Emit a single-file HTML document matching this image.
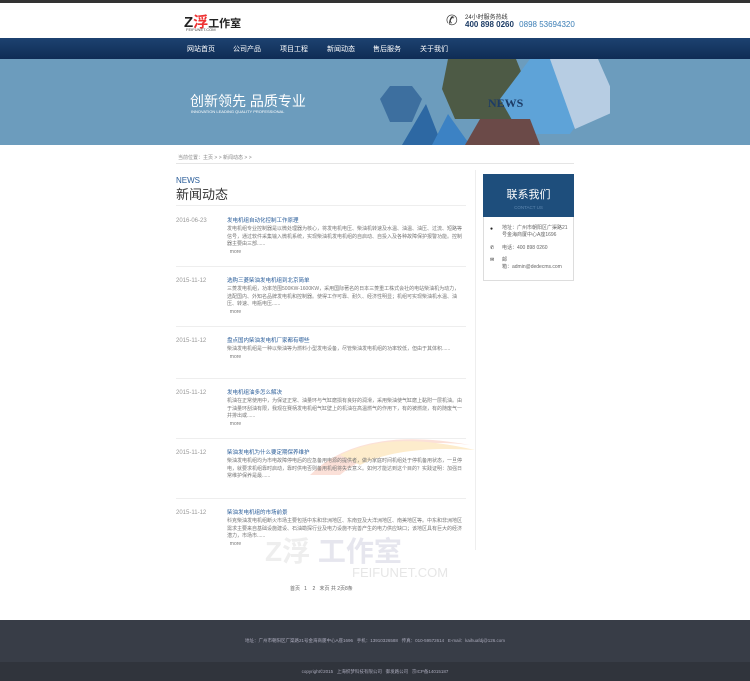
<!DOCTYPE html>
<html><head><meta charset="utf-8"><style>
*{margin:0;padding:0;box-sizing:border-box}
body{width:750px;height:681px;overflow:hidden;background:#fff;font-family:"Liberation Sans","Noto Sans CJK SC",sans-serif;position:relative;color:#666}
.abs{position:absolute}
.top{top:0;left:0;width:750px;height:3px;background:#333}
.nav{top:38px;left:0;width:750px;height:21px;background:linear-gradient(#1d4270,#0f2c55)}
.nav span{position:absolute;top:6px;font-size:7px;color:#fff}
.banner{top:59px;left:0;width:750px;height:86px;background:#6c9cbd}
.art{position:absolute;left:176px;width:290px;font-size:5px;line-height:7.5px}
.art .d{position:absolute;left:0;top:0;color:#999;font-size:6px}
.art .t{position:absolute;left:51px;top:0;color:#2a5d99;font-size:5.5px}
.art .b{position:absolute;left:51px;top:8px;width:237px;color:#777}
.art hr{position:absolute;left:0;top:-12px;width:290px;border:0;border-top:1px solid #eee}
</style></head><body>
<div class="abs top"></div>
<div class="abs" style="left:184px;top:11px;font-size:15px;font-weight:bold;color:#222">Z<span style="color:#e33">浮</span><span style="font-size:11px">工作室</span></div>
<div class="abs" style="left:186px;top:27px;font-size:4px;color:#444">FEIFUNET.COM</div>
<div class="abs" style="left:446px;top:12px;font-size:14px;color:#333">✆</div>
<div class="abs" style="left:465px;top:12px;font-size:6px;color:#333">24小时服务热线</div>
<div class="abs" style="left:465px;top:20px;font-size:8px;font-weight:bold;color:#1d3c66">400 898 0260 <span style="font-weight:normal;color:#3a7db5;margin-left:3px">0898 53694320</span></div>
<div class="abs nav"><span style="left:187px">网站首页</span><span style="left:233px">公司产品</span><span style="left:280px">项目工程</span><span style="left:327px">新闻动态</span><span style="left:373px">售后服务</span><span style="left:420px">关于我们</span></div>
<div class="abs banner">
<div class="abs" style="left:190px;top:32px;font-size:14px;color:#fff">创新领先 品质专业</div>
<div class="abs" style="left:191px;top:50px;font-size:4px;color:#fff">INNOVATION LEADING QUALITY PROFESSIONAL</div>
<svg class="abs" style="left:370px;top:0" width="240" height="86"><polygon points="40,83 48,55 55,83" fill="none"/><polygon points="10,40 20,27 42,27 52,40 42,63 20,63" fill="#3d6f9f"/><polygon points="78,0 146,0 158,30 146,60 85,60 72,30" fill="#4d5a45"/><polygon points="130,40 160,0 215,0 225,40 200,75 150,75" fill="#5ea3d8"/><text x="118" y="48" font-size="12" font-family="Liberation Serif" font-weight="bold" fill="#1d3c66">NEWS</text><polygon points="32,86 56,45 72,86" fill="#2d68a3"/><polygon points="62,86 78,55 100,86" fill="#3c82c4"/><polygon points="180,0 228,0 250,50 205,70" fill="#b7cde3"/><polygon points="110,60 160,60 170,86 95,86" fill="#6b4a48"/></svg>
</div>
<div class="abs" style="left:178px;top:154px;font-size:5px;color:#888">当前位置：主页 &gt; &gt; 新闻动态 &gt; &gt;</div>
<div class="abs" style="left:176px;top:163px;width:398px;border-top:1px solid #e5e5e5"></div>
<div class="abs" style="left:176px;top:176px;font-size:8px;color:#2a5d99">NEWS</div>
<div class="abs" style="left:176px;top:184px;font-size:13px;color:#333">新闻动态</div>
<div class="abs" style="left:176px;top:205px;width:290px;border-top:1px solid #eee"></div>
<svg class="abs" style="left:300px;top:425px" width="180" height="60"><path d="M10,50 Q60,0 170,20 Q90,10 40,50Z" fill="#fbe0d8"/><path d="M40,30 Q90,5 175,25 Q100,20 60,40Z" fill="#fdeccc"/></svg>
<div class="abs" style="left:265px;top:530px;font-size:28px;font-weight:bold;color:#eee">Z浮 <span style="color:#e6e6ee">工作室</span></div>
<div class="abs" style="left:352px;top:565px;font-size:13px;color:#e6e6e6">FEIFUNET.COM</div>
<div class="art" style="top:218px"><div class="d">2016-06-23</div><div class="t">发电机组自动化控制工作原理</div><div class="b">发电机组专业控制器是以微处理器为核心，将发电机电压、柴油机转速及水温、油温、油压、过流、短路等信号，通过软件采集输入微机系统，实现柴油机发电机组的自启动、自投入及各种故障保护报警功能。控制器主要由三部......<br>&nbsp;&nbsp;more</div></div>
<div class="art" style="top:278px"><hr><div class="d">2015-11-12</div><div class="t">选购三菱柴油发电机组到北京简单</div><div class="b">三菱发电机组，功率范围500KW-1600KW，采用国际著名的日本三菱重工株式会社的电站柴油机为动力，选配国内、外知名品牌发电机和控制器。使得工作可靠、耐久、经济性明显；机组可实现柴油机水温、油压、转速、电瓶电压......<br>&nbsp;&nbsp;more</div></div>
<div class="art" style="top:338px"><hr><div class="d">2015-11-12</div><div class="t">盘点国内柴油发电机厂家都有哪些</div><div class="b">柴油发电机组是一种以柴油等为燃料小型发电设备，尽管柴油发电机组的功率较低，但由于其体积......<br>&nbsp;&nbsp;more</div></div>
<div class="art" style="top:390px"><hr><div class="d">2015-11-12</div><div class="t">发电机组油多怎么解决</div><div class="b">机油在正常使用中，为保证正常、油量环与气缸磨损有良好的润滑，采用柴油使气缸磨上黏附一层机油。由于油量环刮油有限，我观在赛柄发电机组气缸壁上的机油在高温燃气的作用下，有的被燃烧，有的随废气一并排出或......<br>&nbsp;&nbsp;more</div></div>
<div class="art" style="top:450px"><hr><div class="d">2015-11-12</div><div class="t">柴油发电机为什么要定期保养维护</div><div class="b">柴油发电机组均为市电故障停电后的应急备用电源的提供者，做为家庭时间机组处于停机备用状态，一旦停电，就要求机组靠时启动，靠时供电否则备用机组将失去意义。如何才能达到这个目的？实践证明：加强日常维护保养是最......</div></div>
<div class="art" style="top:510px"><hr><div class="d">2015-11-12</div><div class="t">柴油发电机组的市场前景</div><div class="b">科克柴油发电机组断火市场主要包括中东和非洲地区、东南亚及大洋洲地区、南美地区等。中东和非洲地区需求主要来自基础设施建设、石油勘探行业及电力设施不完善产生的电力供应缺口；该地区具有巨大的经济潜力，市场市......<br>&nbsp;&nbsp;more</div></div>
<div class="abs" style="left:475px;top:170px;height:380px;border-left:1px solid #eee"></div>
<div class="abs" style="left:483px;top:174px;width:91px;height:43px;background:#1e4e7c;text-align:center;color:#fff"><div style="font-size:11px;margin-top:12px">联系我们</div><div style="font-size:4.5px;color:#5f88b0;margin-top:3px">CONTACT US</div></div>
<div class="abs" style="left:483px;top:217px;width:91px;height:64px;border:1px solid #ddd;border-top:0;font-size:5px;color:#666;line-height:7px">
<div style="position:absolute;left:6px;top:9px;color:#222">●</div><div style="position:absolute;left:18px;top:8px;width:70px">地址：广州市朝阳区广渠路21号金海商厦中心A座1696</div>
<div style="position:absolute;left:6px;top:28px;color:#222">✆</div><div style="position:absolute;left:18px;top:28px">电话：400 898 0260</div>
<div style="position:absolute;left:6px;top:40px;color:#222">✉</div><div style="position:absolute;left:18px;top:40px">邮<br>箱：admin@dedecms.com</div></div>
<div class="abs" style="left:290px;top:585px;font-size:5px;color:#666">首页 &nbsp; 1 &nbsp; &nbsp;2 &nbsp; 末页 共 2页8条</div>
<div class="abs" style="left:0;top:620px;width:750px;height:42px;background:#383d47"></div>
<div class="abs" style="left:0;top:662px;width:750px;height:19px;background:#30343c"></div>
<div class="abs" style="left:0;top:638px;width:750px;text-align:center;font-size:4.5px;color:#aab">地址：广州市朝阳区广渠路21号金海商厦中心A座1696 &nbsp; 手机：13910326588 &nbsp; 传真：010-59572614 &nbsp; E-mail：kaihuafdj@126.com</div>
<div class="abs" style="left:0;top:669px;width:750px;text-align:center;font-size:4.5px;color:#aab">copyright©2015 &nbsp; 上海织梦科技有限公司 &nbsp; 御发路公司 &nbsp; 京ICP备14015187</div>
</body></html>
